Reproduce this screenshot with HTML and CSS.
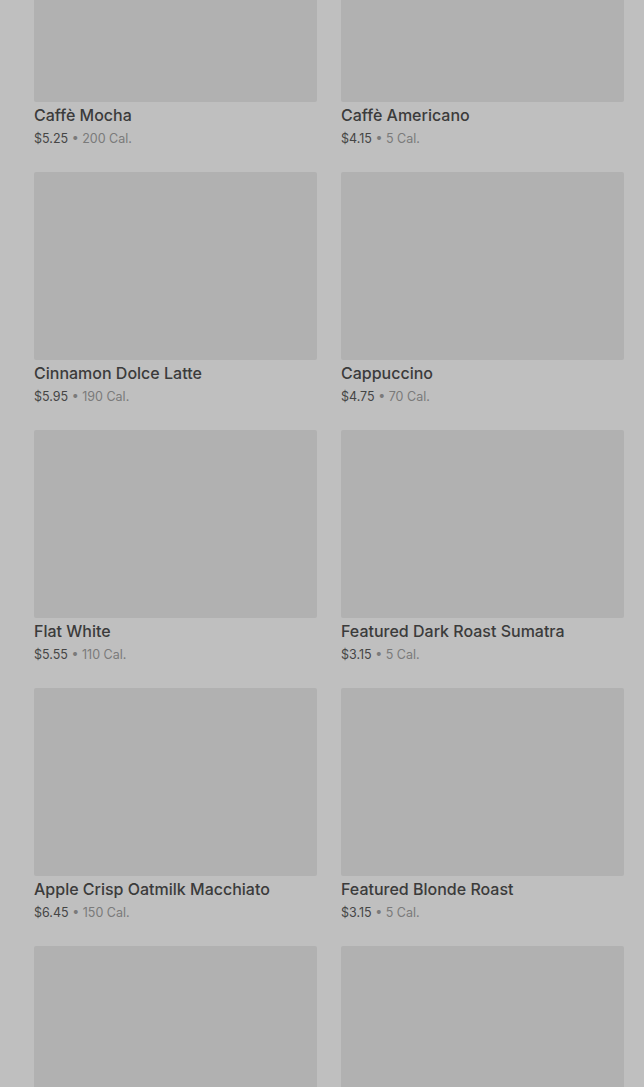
FILE: index.html
```html
<!DOCTYPE html>
<html lang="en">
<head>
    <meta charset="UTF-8">
    <meta name="viewport" content="width=device-width, initial-scale=1.0">
    <title>Menu</title>
    <link rel="stylesheet" href="styles.css">
</head>
<body>
    <div class="grid">
        <div class="card">
            <div class="thumb"></div>
            <div class="name">Caffè Mocha</div>
            <div class="meta"><span class="price">$5.25</span> • 200 Cal.</div>
        </div>
        <div class="card">
            <div class="thumb"></div>
            <div class="name">Caffè Americano</div>
            <div class="meta"><span class="price">$4.15</span> • 5 Cal.</div>
        </div>
        <div class="card">
            <div class="thumb"></div>
            <div class="name">Cinnamon Dolce Latte</div>
            <div class="meta"><span class="price">$5.95</span> • 190 Cal.</div>
        </div>
        <div class="card">
            <div class="thumb"></div>
            <div class="name">Cappuccino</div>
            <div class="meta"><span class="price">$4.75</span> • 70 Cal.</div>
        </div>
        <div class="card">
            <div class="thumb"></div>
            <div class="name">Flat White</div>
            <div class="meta"><span class="price">$5.55</span> • 110 Cal.</div>
        </div>
        <div class="card">
            <div class="thumb"></div>
            <div class="name">Featured Dark Roast Sumatra</div>
            <div class="meta"><span class="price">$3.15</span> • 5 Cal.</div>
        </div>
        <div class="card">
            <div class="thumb"></div>
            <div class="name">Apple Crisp Oatmilk Macchiato</div>
            <div class="meta"><span class="price">$6.45</span> • 150 Cal.</div>
        </div>
        <div class="card">
            <div class="thumb"></div>
            <div class="name">Featured Blonde Roast</div>
            <div class="meta"><span class="price">$3.15</span> • 5 Cal.</div>
        </div>
        <div class="card">
            <div class="thumb"></div>
        </div>
        <div class="card">
            <div class="thumb"></div>
        </div>
    </div>
</body>
</html>
```

FILE: styles.css
```css
body {
    margin: 0;
    background-color: #bfbfbf;
    font-family: Inter, "Noto Sans", sans-serif;
    overflow: hidden;
}

.grid {
    display: grid;
    grid-template-columns: 283px 283px;
    column-gap: 24px;
    row-gap: 22px;
    padding: 0 20px 0 34px;
    margin-top: -86px;
}

.thumb {
    height: 188px;
    background-color: #b1b1b1;
    border-radius: 2px;
    margin-bottom: 2px;
}

.name {
    font-size: 16px;
    line-height: 22px;
    font-weight: 500;
    color: #3b3b3b;
}

.meta {
    margin-top: 2px;
    font-size: 12.5px;
    line-height: 22px;
    color: #7a7a7a;
}

.price {
    color: #454545;
}
```
